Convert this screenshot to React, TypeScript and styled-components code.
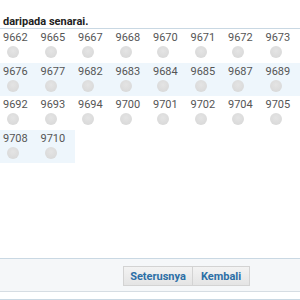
import styled, { createGlobalStyle } from 'styled-components';

const GlobalStyle = createGlobalStyle`
  html, body {
    margin: 0;
    padding: 0;
    background: #fff;
    font-family: Roboto, "Liberation Sans", sans-serif;
  }
`;

const Page = styled.div`
  width: 300px;
  height: 300px;
  overflow: hidden;
  display: flex;
  flex-direction: column;
`;

const Header = styled.div`
  height: 29px;
  box-sizing: border-box;
  padding: 15px 0 0 3px;
  border-bottom: 1px solid #c9d8e3;
  font-size: 11px;
  font-weight: bold;
  color: #222;
  line-height: 13px;
`;

const Grid = styled.div`
  display: flex;
  flex-direction: column;
`;

const Row = styled.div`
  display: flex;
`;

const Cell = styled.div<{ $shaded: boolean }>`
  width: 37.5px;
  height: 33.5px;
  box-sizing: border-box;
  padding: 2px 0 0 3px;
  background: ${({ $shaded }) => ($shaded ? '#eef6fc' : '#fff')};
  display: flex;
  flex-direction: column;
`;

const Num = styled.span`
  font-size: 11px;
  line-height: 13px;
  color: #555;
`;

const Radio = styled.span`
  margin: 2px 0 0 4px;
  width: 12px;
  height: 12px;
  border-radius: 50%;
  background: radial-gradient(circle at 50% 40%, #e4e4e4, #d6d6d6);
`;

const Spacer = styled.div`
  flex: 1;
`;

const Footer = styled.div`
  height: 34px;
  box-sizing: border-box;
  border-top: 1px solid #c9d8e3;
  border-bottom: 1px solid #d6dde3;
  background: #f5f7f9;
  display: flex;
  justify-content: flex-end;
  align-items: flex-start;
  padding: 7px 50px 0 0;
`;

const Button = styled.button<{ $w: number }>`
  width: ${({ $w }) => $w}px;
  height: 20px;
  margin: 0;
  padding: 0;
  border: 1px solid #d3d3d3;
  background: linear-gradient(#f3f3f3, #e4e4e4);
  color: #2c6fa6;
  font-family: Roboto, "Liberation Sans", sans-serif;
  font-size: 11px;
  font-weight: bold;
  & + & {
    border-left: none;
  }
`;

const BottomGap = styled.div`
  height: 8px;
  box-sizing: border-box;
  border-bottom: 1px solid #c9d8e3;
  background: #fff;
`;

const rows = [
  ['9662', '9665', '9667', '9668', '9670', '9671', '9672', '9673'],
  ['9676', '9677', '9682', '9683', '9684', '9685', '9687', '9689'],
  ['9692', '9693', '9694', '9700', '9701', '9702', '9704', '9705'],
  ['9708', '9710'],
];

export default function App() {
  return (
    <Page>
      <GlobalStyle />
      <Header>daripada senarai.</Header>
      <Grid>
        {rows.map((r, i) => (
          <Row key={i}>
            {r.map((n) => (
              <Cell key={n} $shaded={i % 2 === 1}>
                <Num>{n}</Num>
                <Radio />
              </Cell>
            ))}
          </Row>
        ))}
      </Grid>
      <Spacer />
      <Footer>
        <Button $w={70}>Seterusnya</Button>
        <Button $w={57}>Kembali</Button>
      </Footer>
      <BottomGap />
    </Page>
  );
}
